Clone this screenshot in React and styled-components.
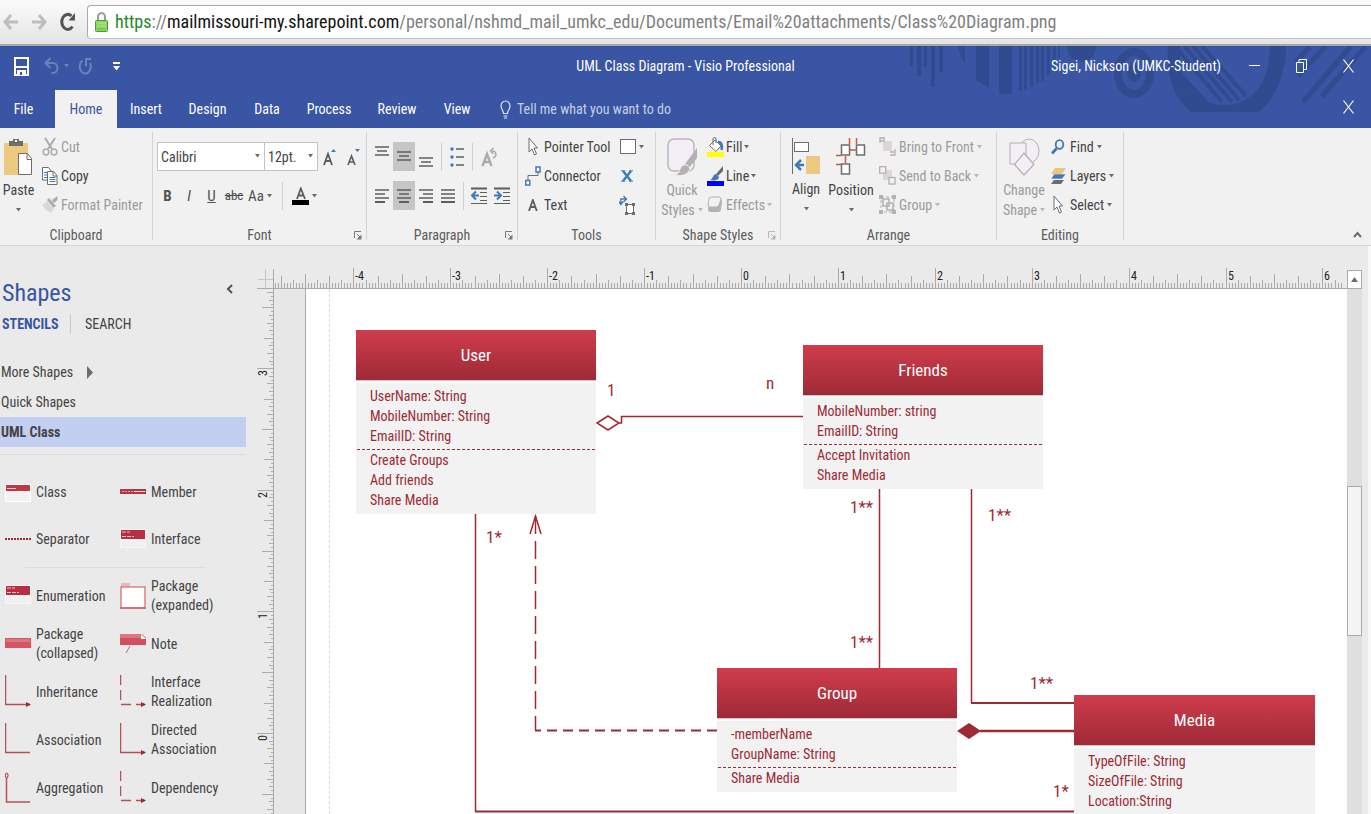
import React from "react";
import styled, { createGlobalStyle, css } from "styled-components";

const FONT = '"Roboto Condensed", Roboto, "Open Sans", sans-serif';
const BLUE = "#3955a3";
const RED = "#9e2a36";
const GREY = "#6d6d6d";
const FAINT = "#b4b0b4";
const ACCENT = "#3f7ab8";

const GlobalStyle = createGlobalStyle`
  * { box-sizing: border-box; }
  body { margin: 0; background: #eaeaea; font: 14px/20px ${FONT}; color: #444; }
  button, select { font: inherit; color: inherit; background: none; border: 0; padding: 0; margin: 0; }
  button { display: inline-flex; align-items: center; white-space: nowrap; }
  a { color: inherit; text-decoration: none; }
  ul { list-style: none; margin: 0; padding: 0; }
  h1, h2, p { margin: 0; font-weight: 400; }
  svg { display: block; flex: none; }
`;

const Page = styled.div`
  display: flex;
  flex-direction: column;
  height: 100vh;
  overflow: hidden;
`;

/* ---------- browser bar ---------- */
const BrowserBar = styled.header`
  display: flex;
  flex: none;
  height: 46px;
  padding-top: 5px;
  background: linear-gradient(#fbfbfb, #e4e4e4);
  border-bottom: 2px solid #a8a8a8;
`;
const NavButtons = styled.nav`
  display: flex;
  align-items: center;
  gap: 12px;
  width: 87px;
  height: 34px;
  padding-left: 3px;
`;
const AddressBox = styled.div`
  display: flex;
  align-items: center;
  gap: 7px;
  flex: 1;
  min-width: 0;
  height: 34px;
  padding-left: 7px;
  background: #fff;
  border: 1px solid #a9a9a9;
  border-right: 0;
  border-bottom-color: #c4c4c4;
  border-radius: 4px 0 0 4px;
`;
const Url = styled.a`
  font-size: 18px;
  line-height: 26px;
  color: #808080;
  white-space: nowrap;
  b { font-weight: 400; color: #111; }
  i { font-style: normal; color: #1d8a1d; }
`;

/* ---------- application title and tabs ---------- */
const AppHeader = styled.div`
  position: relative;
  flex: none;
  background: ${BLUE};
  color: #fff;
`;
const Decoration = styled.svg`
  position: absolute;
  top: 0;
  right: 0;
`;
const TitleRow = styled.div`
  position: relative;
  display: grid;
  grid-template-columns: 1fr auto 1fr;
  align-items: center;
  height: 40px;
`;
const QuickAccess = styled.div`
  display: flex;
  align-items: center;
  padding-left: 14px;
`;
const QuickButton = styled.button`
  width: ${(p) => p.$w}px;
`;
const TitleText = styled.h1`
  font-size: 14px;
  line-height: 20px;
`;
const WindowSide = styled.div`
  display: flex;
  justify-content: flex-end;
  align-items: center;
  gap: 36px;
  padding-right: 17px;
`;
const UserName = styled.span`
  white-space: nowrap;
  margin-right: -8px;
`;
const TabRow = styled.div`
  position: relative;
  display: flex;
  align-items: flex-end;
  height: 42px;
  padding: 0 17px 0 0;
`;
const Tab = styled.button`
  justify-content: center;
  width: ${(p) => p.$w}px;
  height: 38px;
  ${(p) => p.$file && css`
    padding-right: 8px;
  `}
  ${(p) => p.$active && css`
    background: #f1f1f1;
    color: ${BLUE};
  `}
`;
const TellMe = styled.button`
  gap: 6px;
  height: 38px;
  margin-left: 16px;
  color: #c6cfe6;
`;
const TabRowEnd = styled.div`
  display: flex;
  align-items: center;
  height: 42px;
  margin-left: auto;
`;

/* ---------- ribbon ---------- */
const Ribbon = styled.div`
  display: flex;
  flex: none;
  height: 118px;
  padding-top: 4px;
  background: #f1f1f1;
  border-bottom: 1px solid #d4d4d4;
`;
const Group = styled.section`
  display: flex;
  flex: none;
  flex-direction: column;
  width: ${(p) => p.$w}px;
  height: 108px;
  border-right: 1px solid #d4d4d4;
`;
const GroupBody = styled.div`
  display: flex;
  flex: none;
  height: 92px;
  padding-left: ${(p) => p.$pad || 0}px;
`;
const GroupFoot = styled.div`
  display: grid;
  flex: none;
  grid-template-columns: 1fr auto 1fr;
  align-items: center;
  height: 22px;
  padding: 0 4px;
  color: #5c5c5c;
  button { grid-column: 3; justify-self: end; }
`;
const GroupName = styled.h2`
  grid-column: 2;
  font-size: 14px;
  line-height: 20px;
`;
const BigButton = styled.button`
  flex-direction: column;
  flex: none;
  width: ${(p) => p.$w}px;
  height: 90px;
  padding-top: 6px;
  text-align: center;
  line-height: 20px;
  color: ${(p) => (p.$off ? "#9b9b9b" : "#444")};
  svg + span { margin-top: 4px; }
`;
const CaretLine = styled.span`
  display: flex;
  align-items: center;
  justify-content: center;
  gap: 3px;
  height: 20px;
`;
const Column = styled.div`
  display: flex;
  flex-direction: column;
  width: ${(p) => (p.$w ? p.$w + "px" : "auto")};
  padding-left: ${(p) => p.$pad || 0}px;
`;
const Command = styled.button`
  height: 29px;
  gap: ${(p) => p.$gap || 2}px;
  color: ${(p) => (p.$off ? "#9b9b9b" : "#444")};
`;
const IconSlot = styled.span`
  display: flex;
  justify-content: center;
  width: 18px;
`;
const Strip = styled.div`
  display: flex;
  align-items: center;
  height: 29px;
  margin-top: ${(p) => p.$top || 0}px;
`;
const Picker = styled.label`
  position: relative;
  width: ${(p) => p.$w}px;
  margin-right: -1px;
  svg { position: absolute; right: 5px; top: 12px; pointer-events: none; }
`;
const Select = styled.select`
  appearance: none;
  display: block;
  width: 100%;
  height: 29px;
  padding: 0 3px;
  background: #fff;
  border: 1px solid #c3c3c3;
`;
const Glyph = styled.button`
  justify-content: center;
  gap: 3px;
  width: ${(p) => p.$w}px;
  height: 29px;
  font-size: 15px;
  color: #505050;
  background: ${(p) => (p.$on ? "#c6c6c6" : "none")};
  font-weight: ${(p) => (p.$bold ? 700 : 400)};
`;
const Strike = styled.s`
  font-size: 13px;
`;
const Divider = styled.span`
  width: 1px;
  height: 28px;
  margin: 0 ${(p) => p.$m || 7}px;
  background: #d0d0d0;
`;
const Collapse = styled.button`
  align-self: flex-end;
  margin: 0 9px 6px auto;
`;

/* ---------- workspace ---------- */
const Workspace = styled.main`
  display: flex;
  flex: 1;
  min-height: 0;
  border-right: 3px solid #f8f8f8;
`;
const Sidebar = styled.aside`
  display: flex;
  flex: none;
  flex-direction: column;
  width: 247px;
  padding: 30px 1px 0 0;
`;
const SidebarHead = styled.div`
  display: flex;
  align-items: center;
  justify-content: space-between;
  height: 34px;
  padding: 0 13px 0 2px;
  button { height: 26px; align-self: flex-start; }
`;
const SidebarTitle = styled.h2`
  font-size: 24px;
  line-height: 34px;
  color: ${BLUE};
`;
const PaneTabs = styled.div`
  display: flex;
  align-items: center;
  height: 28px;
  padding-left: 2px;
`;
const PaneTab = styled.button`
  height: 20px;
  color: #444;
  padding-left: 14px;
  ${(p) => p.$active && css`
    width: 69px;
    padding-left: 0;
    color: ${BLUE};
    font-weight: 700;
    border-right: 1px solid #c8c8c8;
  `}
`;
const StencilList = styled.ul`
  padding: 19px 0 7px;
  border-bottom: 1px solid #dcdcdc;
`;
const StencilItem = styled.li`
  height: 30px;
  background: ${(p) => (p.$active ? "#c2cef2" : "none")};
  button {
    width: 100%;
    height: 30px;
    padding-left: 1px;
    gap: 14px;
    font-weight: ${(p) => (p.$active ? 700 : 400)};
  }
`;
const ShapeGrid = styled.ul`
  display: grid;
  grid-template-columns: 115px 1fr;
  grid-auto-rows: ${(p) => p.$row}px;
  padding: ${(p) => p.$top}px 0 ${(p) => p.$bottom || 0}px 5px;
`;
const ShapeDivider = styled.hr`
  width: 181px;
  height: 1px;
  margin: 0 0 0 25px;
  border: 0;
  flex: none;
  background: #dcdcdc;
`;
const ShapeButton = styled.button`
  height: 100%;
  gap: 5px;
  text-align: left;
  line-height: 19px;
  span { white-space: pre-line; }
`;
const Stage = styled.div`
  display: grid;
  flex: 1;
  min-width: 0;
  grid-template-columns: 27px minmax(0, 1fr) 15px;
  grid-template-rows: 43px minmax(0, 1fr);
  padding-right: 6px;
`;
const Corner = styled.div`
  display: flex;
  align-items: flex-end;
  justify-content: flex-end;
`;
const TopRuler = styled.div`
  display: flex;
  align-items: flex-end;
  overflow: hidden;
  border-bottom: 1px solid #ababab;
`;
const SideRuler = styled.div`
  display: flex;
  justify-content: flex-end;
  overflow: hidden;
  border-right: 1px solid #ababab;
`;
const TickLabel = styled.text`
  font: 12px ${FONT};
  fill: #222;
`;
const ScrollTop = styled.div`
  display: flex;
  align-items: flex-end;
`;
const ScrollButton = styled.button`
  justify-content: center;
  width: 15px;
  height: 19px;
  background: #fff;
  border: 1px solid #ababab;
`;
const Track = styled.div`
  padding-top: 197px;
  background: #dfdfdf;
`;
const Thumb = styled.div`
  height: 150px;
  background: #f4f4f4;
  border: 1px solid #ababab;
`;
const Pasteboard = styled.div`
  display: flex;
  overflow: hidden;
  padding-left: 31px;
  background: #e7e7e7;
`;
const Sheet = styled.div`
  position: relative;
  flex: 1;
  background: #fff;
  border-left: 1px solid #ababab;
  &::before {
    content: "";
    position: absolute;
    inset: 0 auto 0 23px;
    border-left: 1px dashed #d9d9d9;
  }
`;
const Wires = styled.svg`
  position: absolute;
  top: 0;
  left: 0;
`;
const ClassNode = styled.article`
  position: absolute;
  left: ${(p) => p.$x}px;
  top: ${(p) => p.$y}px;
  width: ${(p) => p.$w}px;
  color: ${RED};
`;
const ClassName = styled.h2`
  height: 51px;
  font-size: 17px;
  line-height: 51px;
  text-align: center;
  color: #fff;
  background: linear-gradient(#d03c4c, #9e2a36);
  border-bottom: 1px solid #e3c3c7;
`;
const ClassBody = styled.div`
  margin-top: 2px;
  padding: 3px 0 4px;
  background: #f2f2f2;
`;
const Member = styled.p`
  padding-left: 14px;
`;
const Split = styled.hr`
  height: 0;
  margin: 3px 1px 0;
  border: 0;
  border-top: 1px dashed ${RED};
`;
const Multiplicity = styled.span`
  position: absolute;
  left: ${(p) => p.$x}px;
  top: ${(p) => p.$y}px;
  font-size: 17px;
  color: ${RED};
`;

/* ---------- icons ---------- */
const Svg = ({ w, h, children, ...rest }) => (
  <svg width={w} height={h} viewBox={`0 0 ${w} ${h}`} fill="none" aria-hidden="true" {...rest}>{children}</svg>
);
const Caret = ({ c = "#6a6a6a" }) => <Svg w={5} h={4}><path d="M0 0h5L2.500 3.500z" fill={c} /></Svg>;
const CloseIcon = () => <Svg w={11} h={14}><path d="M.5.5l10 13M10.500.5l-10 13" stroke="#fff" strokeWidth="1.200" /></Svg>;
const BackIcon = () => <Svg w={16} h={18}><path d="M15 9H2M8 2L2 9l6 7" stroke="#bdbdbd" strokeWidth="3" /></Svg>;
const ForwardIcon = () => <Svg w={16} h={18}><path d="M1 9h13M8 2l6 7-6 7" stroke="#bdbdbd" strokeWidth="3" /></Svg>;
const ReloadIcon = () => (
  <Svg w={17} h={20}><path d="M13.500 14.500A6 7.500 0 1 1 12.500 4" stroke="#555" strokeWidth="3" /><path d="M9.500 8.500H16V1z" fill="#555" /></Svg>
);
const LockIcon = () => (
  <Svg w={13} h={20}>
    <path d="M3 9V5a3.500 4 0 0 1 7 0v4" stroke="#9a9a9a" strokeWidth="2" />
    <rect x=".5" y="8.500" width="12" height="11" rx="1" fill="#8bd65e" stroke="#4c9a35" />
    <path d="M2 11h9M2 14h9" stroke="#b3ea8d" /><path d="M2 17h9" stroke="#6cc045" />
  </Svg>
);
const SaveIcon = () => (
  <Svg w={15} h={19}>
    <path d="M1 1h13v17H1z" stroke="#fff" strokeWidth="2" /><path d="M1 10h13" stroke="#fff" strokeWidth="2" />
    <path d="M3 13h9v5H3z" fill="#fff" /><path d="M3 11h9v2H3zM6 15h2v3H6z" fill={BLUE} />
  </Svg>
);
const UndoIcon = () => <Svg w={15} h={18}><path d="M6.500 1L1.500 6l5 5M2 6h7a4.500 5 0 0 1 0 10H7.500" stroke="#6d82bd" strokeWidth="2" /></Svg>;
const RedoIcon = () => <Svg w={15} h={18}><path d="M4.500 3.500A5.500 7 0 1 0 12 6" stroke="#6d82bd" strokeWidth="2" /><path d="M8 9V2h5" stroke="#6d82bd" strokeWidth="2" /></Svg>;
const CustomizeIcon = () => <Svg w={7} h={9}><path d="M0 0h7v2H0zM0 4h7L3.500 8.500z" fill="#fff" /></Svg>;
const BulbIcon = () => (
  <Svg w={11} h={19}><path d="M3.500 13.500c0-3-2.500-4-2.500-7.500a4.500 5 0 0 1 9 0c0 3.500-2.500 4.500-2.500 7.500zM3.500 16h4M4 18h3" stroke="#dfe5f3" strokeWidth="1.200" /></Svg>
);
const PasteIcon = () => (
  <Svg w={29} h={38}>
    <rect y="5" width="24" height="32" fill="#edc87f" />
    <path d="M5 8V3h4V1h6v2h4v5z" fill="#6d6d6d" /><rect x="11" y="2" width="2" height="2" fill="#fff" />
    <path d="M14.500 15.500h9l4 5v16h-13z" fill="#fff" stroke={GREY} /><path d="M23 15.500v6h5" stroke={GREY} />
  </Svg>
);
const CutIcon = () => (
  <Svg w={16} h={19}>
    <path d="M3 1l7 11M13 1L6 12" stroke="#ababab" strokeWidth="2" />
    <ellipse cx="4" cy="15" rx="2.800" ry="3" stroke="#ababab" strokeWidth="1.500" /><ellipse cx="12" cy="15" rx="2.800" ry="3" stroke="#ababab" strokeWidth="1.500" />
  </Svg>
);
const CopyIcon = () => (
  <Svg w={16} h={18}>
    <path d="M.5.5h6l3 4v8.500h-9z" fill="#fff" stroke={GREY} /><path d="M2 5.500h4M2 8h3M2 10.500h3" stroke={ACCENT} />
    <path d="M5.500 4.500h6l3.500 4v9H5.500z" fill="#fff" stroke={GREY} /><path d="M11 5v4h4" stroke={GREY} /><path d="M7.500 10.500h6M7.500 12.500h6M7.500 14.500h6" stroke={ACCENT} />
  </Svg>
);
const BrushIcon = () => (
  <Svg w={16} h={17}><path d="M15.500 0v4L12 7l-2-3z" fill="#a9a9a9" /><path d="M5 4l2-2 7 8-3 2z" fill="#ababab" /><path d="M0 9l6-4 6 7-3 5-5-3z" fill="#dcd6dc" /></Svg>
);
const Launcher = ({ c = "#7a7a7a" }) => (
  <Svg w={8} h={9}><path d="M.5 7V.5H7" stroke={c} /><path d="M3 3l3 3" stroke={c} /><path d="M7.500 3.500v5h-5z" fill={c} /></Svg>
);
const GrowIcon = () => <Svg w={13} h={18}><path d="M1 17L5 6l4 11M2.500 13h5" stroke="#5c5c5c" strokeWidth="1.800" /><path d="M8 4l2.500-3L13 4z" fill={ACCENT} /></Svg>;
const ShrinkIcon = () => <Svg w={13} h={18}><path d="M1 17l3.500-9L8 17M2 14h5" stroke="#5c5c5c" strokeWidth="1.600" /><path d="M8 1h5l-2.500 3z" fill={ACCENT} /></Svg>;
const FontColorIcon = () => <Svg w={17} h={18}><path d="M5 12L8.800 1.500 13 12M6.500 8.500h5" stroke="#5c5c5c" strokeWidth="1.800" /><path d="M0 13h17v5H0z" fill="#000" /></Svg>;
const Lines = ({ rows, w = 14 }) => (
  <Svg w={w} h={14}>{rows.map(([x1, x2], i) => <path key={i} d={`M${x1} ${i * 4 + 1}H${x2}`} stroke="#5e5e5e" strokeWidth={i === 3 ? 2 : 1.500} />)}</Svg>
);
const FULL = [0, 14], NARROW = [2, 12];
const VLines = ({ y }) => (
  <Svg w={14} h={28}>{[[0, 14], NARROW, [0, 14]].map(([a, b], i) => <path key={i} d={`M${a} ${y + i * 4}H${b}`} stroke="#5e5e5e" strokeWidth="1.500" />)}</Svg>
);
const BulletIcon = () => (
  <Svg w={14} h={20}>{[2, 10, 18].map((y) => <g key={y}><circle cx="2" cy={y} r="1.700" fill={ACCENT} /><path d={`M6 ${y}h8`} stroke="#5e5e5e" strokeWidth="1.500" /></g>)}</Svg>
);
const RotateTextIcon = () => (
  <Svg w={17} h={20}><path d="M1.500 19L6 7l4.500 12M3 15h6" stroke="#ababab" strokeWidth="2.400" /><path d="M12 11c4-1 4-7-1-7M12.500 1L9.500 4l3 3" stroke="#ababab" strokeWidth="1.500" /></Svg>
);
const IndentIcon = ({ flip }) => (
  <Svg w={17} h={18}>
    <path d="M0 1.500h16" stroke="#5e5e5e" strokeWidth="2" /><path d="M9 5.500h7M9 9.500h7M9 13.500h7M0 16.500h16" stroke="#5e5e5e" strokeWidth="1.200" />
    {flip ? <path d="M0 8.500h6M3 4.500l4 4-4 4" stroke={ACCENT} strokeWidth="2" /> : <path d="M1 8.500h7M5 4.500l-4 4 4 4" stroke={ACCENT} strokeWidth="2" />}
  </Svg>
);
const PointerIcon = () => (
  <Svg w={10} h={19}><path d="M1 1v14l3-3 2.500 6 2-1L6 11h3.500z" fill="#fff" stroke="#6d6d6d" /></Svg>
);
const ConnectorIcon = () => (
  <Svg w={16} h={20}><path d="M3 14V9.500h10V6" stroke={GREY} /><rect x=".75" y="14.500" width="4" height="4.500" fill="#fff" stroke={ACCENT} strokeWidth="1.500" /><rect x="11" y="1" width="4" height="5" fill="#fff" stroke={ACCENT} strokeWidth="1.500" /></Svg>
);
const TextIcon = () => <Svg w={10} h={12}><path d="M1 12L4.800 1l4 11M2.500 8h5" stroke="#5c5c5c" strokeWidth="1.800" /></Svg>;
const BoxIcon = () => <Svg w={16} h={15}><rect x=".5" y=".5" width="15" height="14" fill="#fff" stroke={GREY} /></Svg>;
const CrossIcon = () => <Svg w={12} h={12}><path d="M2 1l8 10M10 1L2 11" stroke={ACCENT} strokeWidth="2.400" /><path d="M0 .8h4M8 .8h4M0 11.200h4M8 11.200h4" stroke={ACCENT} /></Svg>;
const TextBlockIcon = () => (
  <Svg w={16} h={20}><path d="M1.800 8V4H7M4.500 1l3 3-3 3M0 6.500L1.800 9.500 4 6.500" stroke={ACCENT} strokeWidth="1.300" /><rect x="7.500" y="9.500" width="7" height="9" fill="#fff" stroke={GREY} /><path d="M6 8h3v3H6zM13 8h3v3h-3zM6 17h3v3H6zM13 17h3v3h-3z" fill={GREY} /></Svg>
);
const QuickStylesIcon = () => (
  <Svg w={31} h={38}><rect x="1" y="1" width="26" height="32" rx="6" fill="#f4eff6" stroke="#bcb6bc" strokeWidth="1.500" /><path d="M30 10v10l-8 10-4-4z" fill="#b4b0b4" /><path d="M20 27c-5-1-7 3-8 7-1 2-3 3-5 3 7 2 15 0 16-7z" fill="#b4b0b4" stroke="#f1f1f1" /></Svg>
);
const FillIcon = () => (
  <Svg w={17} h={20}><path d="M2.500 8.500L8 3l6 6-5 5.500z" fill="#fff" stroke={GREY} /><path d="M6 8V2a1.500 1.500 0 0 1 3 0v4" stroke={GREY} /><path d="M11 5c4 0 4.500 4 3.500 8" stroke={ACCENT} strokeWidth="2.500" /><path d="M0 15h17v5H0z" fill="#ff0" /></Svg>
);
const LineIcon = () => (
  <Svg w={17} h={20}><path d="M16 0v5l-5 5-2-2z" fill="#6d6d6d" /><path d="M9 8l3 3c0 3-4 4-9 3 3-1 3-6 6-6z" fill={ACCENT} /><path d="M0 15h17v5H0z" fill="#00f" /></Svg>
);
const EffectsIcon = () => (
  <Svg w={16} h={17}><path d="M3 3h9a3 3 0 0 1 3 3l-1 7a3 3 0 0 1-3 3H4a3 3 0 0 1-3-3z" fill="#b4b0b4" /><path d="M4 1h8a2 2 0 0 1 2 2l-2 6a3 3 0 0 1-3 2H3a2 2 0 0 1-2-2l1-6a2 2 0 0 1 2-2z" fill="#f4f1f4" stroke="#b4b0b4" /></Svg>
);
const AlignIcon = () => (
  <Svg w={29} h={37}><path d="M.5 0v36" stroke="#6d6d6d" /><rect x="2.500" y="4.500" width="14" height="9" fill="#fff" stroke={GREY} /><rect x="14" y="18" width="14" height="18" fill="#edc87f" /><path d="M4 27h8M9 22l-5 5 5 5" stroke={ACCENT} strokeWidth="2.500" /></Svg>
);
const PositionIcon = () => (
  <Svg w={30} h={38}>
    <path d="M13.500 0v6M20.500 0v6M14 12h7M9.500 18v7M0 17.500h5M0 26.500h5" stroke="#d0583a" strokeWidth="1.500" />
    <rect x="5.500" y="7" width="8" height="10" fill="#fff" stroke="#6d6d6d" strokeWidth="1.500" /><rect x="20.500" y="7" width="8" height="10" fill="#fff" stroke="#6d6d6d" strokeWidth="1.500" /><rect x="5.500" y="26" width="8" height="10" fill="#fff" stroke="#6d6d6d" strokeWidth="1.500" />
  </Svg>
);
const FrontIcon = () => <Svg w={17} h={19}><rect x="4" y="4" width="9" height="10" fill="#dcd6dc" /><path d="M1 6V1h5M11 18h5v-6M1 4h4V1M11 15h4" stroke={FAINT} strokeWidth="1.300" /></Svg>;
const BackwardIcon = () => <Svg w={17} h={19}><rect x="4" y="4" width="9" height="10" fill="#dcd6dc" /><rect x=".7" y=".7" width="6" height="6.500" fill="#f4f1f4" stroke={FAINT} strokeWidth="1.300" /><rect x="10" y="11.500" width="6" height="6.500" fill="#f4f1f4" stroke={FAINT} strokeWidth="1.300" /></Svg>;
const GroupIcon = () => (
  <Svg w={17} h={19}><path d="M2 2h13v15H2z" stroke={FAINT} strokeDasharray="3 2" /><rect x="4" y="4" width="6" height="7" stroke={FAINT} strokeWidth="1.500" /><rect x="8" y="8" width="6" height="7" stroke={FAINT} strokeWidth="1.500" /><path d="M0 0h4v4H0zM13 0h4v4h-4zM0 15h4v4H0zM13 15h4v4h-4z" fill={FAINT} /></Svg>
);
const ChangeIcon = () => (
  <Svg w={31} h={38}><ellipse cx="20" cy="13" rx="10" ry="12" fill="#f4eff6" stroke={FAINT} /><path d="M1 5h16v21H1z" fill="#f4eff6" stroke={FAINT} /><path d="M15 15l10 11.500L15 37 5.500 26.500z" fill="#f4eff6" stroke={FAINT} strokeWidth="1.300" /></Svg>
);
const FindIcon = () => <Svg w={14} h={16}><ellipse cx="8.500" cy="5.500" rx="3.800" ry="4.300" stroke={ACCENT} strokeWidth="1.800" /><path d="M5.500 9.500L1 14.500" stroke={ACCENT} strokeWidth="2.800" /></Svg>;
const LayersIcon = () => <Svg w={15} h={18}><path d="M0 17l3-4h10l-3 4z" fill="#6d6d6d" /><path d="M0 12l3-5h12l-4 5z" fill={ACCENT} stroke="#f1f1f1" strokeWidth=".6" /><path d="M0 7l4-6h11l-4 6z" fill="#edc47a" /></Svg>;

/* stencil thumbnails */
const Wire = (props) => <path stroke={RED} fill="none" {...props} />;
const thumbs = {
  header: (
    <Svg w={26} h={20}><path d="M0 1h26v18H0z" fill="#fff" /><path d="M1 2h24v6H1z" fill="#c33545" /><path d="M2 5.500h9" stroke="#f0c8cc" /><path d="M1 9h24v9H1z" fill="#f2f2f2" /></Svg>
  ),
  member: <Svg w={26} h={20}><path d="M0 6h26v5H0z" fill="#b03643" /><path d="M14 8h11v1H14z" fill="#f4e3e5" /><path d="M2 8.500h11" stroke="#dba5ab" strokeDasharray="2 1" /></Svg>,
  separator: <Svg w={26} h={20}><Wire d="M0 9h26" strokeWidth="2" strokeDasharray="2 1" /></Svg>,
  iface: (
    <Svg w={26} h={22}><path d="M0 0h26v19H0z" fill="#f7f7f7" /><path d="M1 1h24v9H1z" fill="#b8303f" /><path d="M2 3h8M2 7.500h12" stroke="#ecc0c5" strokeDasharray="4 1" /><path d="M1 12h24v6H1z" fill="#f0f0f0" /></Svg>
  ),
  expanded: <Svg w={26} h={28}><path d="M1 1h9v4H1z" fill="#e9b8bd" /><path d="M1 5h24v21H1z" fill="#fff" stroke="#dc7f89" strokeWidth="1.500" /><path d="M0 26h26" stroke="#d3606c" strokeWidth="1.500" /></Svg>,
  collapsed: <Svg w={26} h={20}><path d="M0 4h26v10H0z" fill="#d55563" /><path d="M1 5h24v3H1z" fill="#dd7681" /></Svg>,
  note: <Svg w={26} h={24}><path d="M0 2h22l4 4v7H0z" fill="#d34f5e" /><path d="M0 2h22v4H0z" fill="#dc7681" /><path d="M21 2l5 5h-5z" fill="#fff" /><Wire d="M10 14l-4 7" stroke="#d3606c" /></Svg>,
};
const ElbowThumb = ({ dashed, arrow, ring }) => (
  <Svg w={26} h={34}>
    <Wire d={ring ? "M1.500 7v24H25" : "M.5 0v29.500H25"} stroke="#b4525c" strokeWidth="1.500" strokeDasharray={dashed ? "10 5" : undefined} />
    {arrow && <path d="M21 27l5 2.500-5 2.500z" fill={RED} />}
    {ring && <ellipse cx="1.700" cy="4.500" rx="1.300" ry="2.500" stroke={RED} />}
  </Svg>
);

/* ---------- data ---------- */
const tabs = [["File", 55], ["Home", 62], ["Insert", 58], ["Design", 65], ["Data", 54], ["Process", 70], ["Review", 66], ["View", 54]];
const shapesTop = [["Class", thumbs.header], ["Member", thumbs.member], ["Separator", thumbs.separator], ["Interface", thumbs.iface]];
const shapesBottom = [
  ["Enumeration", thumbs.iface], ["Package\n(expanded)", thumbs.expanded],
  ["Package\n(collapsed)", thumbs.collapsed], ["Note", thumbs.note],
  ["Inheritance", <ElbowThumb arrow />], ["Interface\nRealization", <ElbowThumb arrow dashed />],
  ["Association", <ElbowThumb />], ["Directed\nAssociation", <ElbowThumb arrow />],
  ["Aggregation", <ElbowThumb ring />], ["Dependency", <ElbowThumb arrow dashed />],
];
const classes = [
  { name: "User", x: 50, y: 41, w: 240, fields: ["UserName: String", "MobileNumber: String", "EmailID: String"], methods: ["Create Groups", "Add friends", "Share Media"] },
  { name: "Friends", x: 497, y: 56, w: 240, fields: ["MobileNumber: string", "EmailID: String"], methods: ["Accept Invitation", "Share Media"] },
  { name: "Group", x: 411, y: 379, w: 240, fields: ["-memberName", "GroupName: String"], methods: ["Share Media"] },
  { name: "Media", x: 768, y: 406, w: 241, fields: ["TypeOfFile: String", "SizeOfFile: String", "Location:String"], methods: [] },
];
const multiplicities = [
  ["1", 301, 91], ["n", 460, 84], ["1*", 180, 238], ["1**", 544, 208], ["1**", 682, 216],
  ["1**", 544, 343], ["1**", 724, 384], ["1*", 747, 492],
];

const tickLength = (i) => (i % 32 === 0 ? 20 : i % 16 === 0 ? 14 : i % 8 === 0 ? 12 : i % 4 === 0 ? 8 : 5);
const TopTicks = () => {
  const unit = 96.9, zero = 468;
  const first = -154, last = 198;
  const ticks = [];
  for (let i = first; i <= last; i++) {
    const x = Math.round(zero + (i * unit) / 32) - 0.5;
    if (x > 0) ticks.push(`M${x} 20v-${tickLength(i)}`);
  }
  return (
    <Svg w={1073} h={20}>
      <path d={ticks.join("")} stroke="#ababab" />
      {[-4, -3, -2, -1, 0, 1, 2, 3, 4, 5, 6].map((n) => <TickLabel key={n} x={Math.round(zero + n * unit) + 1} y="12">{n}</TickLabel>)}
    </Svg>
  );
};
const SideTicks = () => {
  const unit = 121.6, zero = 444;
  const ticks = [];
  for (let i = -22; i <= 116; i++) {
    const len = i % 32 === 0 ? 16 : i % 16 === 0 ? 11 : i % 8 === 0 ? 9 : i % 4 === 0 ? 6 : i % 2 === 0 ? 4 : 2;
    ticks.push(`M16 ${Math.round(zero - (i * unit) / 32) + 0.5}h-${len}`);
  }
  return (
    <Svg w={16} h={525}>
      <path d={ticks.join("")} stroke="#ababab" />
      {[3, 2, 1, 0].map((n) => {
        const y = Math.round(zero - n * unit) + 8;
        return <TickLabel key={n} x="10" y={y} transform={`rotate(-90 10 ${y})`}>{n}</TickLabel>;
      })}
    </Svg>
  );
};
const HeaderArt = () => (
  <Decoration width="465" height="67" viewBox="906 46 465 67" fill="none" aria-hidden="true">
    <g fill="#304b8f">
      <path d="M910 46h3v20h-3zM917 46h4v30h-4zM924 46h3v21h-3zM931 46h4v41h-4zM939 46h4v26h-4z" />
      <path d="M958 46h7v17l-4-6zM976 46h13v42l-13-8zM999 46h13v48h-13zM1019 46h3v45h-3zM1024 46h3v44h-3zM1030 46h3v41h-3zM1036 46h3v37h-3zM1041 46h3v35h-3zM1047 46h3v29h-3zM1053 46h3v20h-3zM1058 46h2v12h-2z" />
      <path d="M1067 46h29a14 15 0 0 1-29 0z" />
      <path d="M1168 46h10c0 30 15 59 47 59 25 0 45-20 45-59h16c0 26-10 54-28 66h-67c-16-12-25-36-23-66z" />
    </g>
    <ellipse cx="1134" cy="73" rx="16" ry="21" stroke="#304b8f" strokeWidth="8" />
    <ellipse cx="1134" cy="73" rx="7" ry="9" fill="#304b8f" />
    <path d="M1178 46v26l28 30M1178 50l44 52M1184 46l48 56M1193 46l46 54M1202 46l44 50" stroke="#304b8f" strokeWidth="4" />
    <path d="M1296 62l14-16M1298 76l28-30M1303 102l48-56M1322 96l44-50" stroke="#304b8f" strokeWidth="5" />
  </Decoration>
);

const RibbonGroup = ({ name, w, pad, launcher, children }) => (
  <Group $w={w} aria-label={name}>
    <GroupBody $pad={pad}>{children}</GroupBody>
    <GroupFoot>
      <GroupName>{name}</GroupName>
      {launcher && <button aria-label={`${name} options`}><Launcher c={launcher} /></button>}
    </GroupFoot>
  </Group>
);
const Cmd = ({ icon, label, caret, off, gap }) => (
  <Command $off={off} $gap={gap}>
    <IconSlot>{icon}</IconSlot>
    <span>{label}</span>
    {caret && <Caret c={off ? "#b8b8b8" : undefined} />}
  </Command>
);
const ShapeList = ({ items, ...rest }) => (
  <ShapeGrid {...rest}>
    {items.map(([label, thumb]) => <li key={label}><ShapeButton>{thumb}<span>{label}</span></ShapeButton></li>)}
  </ShapeGrid>
);

export default function App() {
  return (
    <Page>
      <GlobalStyle />
      <BrowserBar>
        <NavButtons>
          <button aria-label="Back"><BackIcon /></button>
          <button aria-label="Forward"><ForwardIcon /></button>
          <button aria-label="Reload"><ReloadIcon /></button>
        </NavButtons>
        <AddressBox>
          <LockIcon />
          <Url href="#"><i>https</i>://<b>mailmissouri-my.sharepoint.com</b>/personal/nshmd_mail_umkc_edu/Documents/Email%20attachments/Class%20Diagram.png</Url>
        </AddressBox>
      </BrowserBar>

      <AppHeader>
        <HeaderArt />
        <TitleRow>
          <QuickAccess>
            <QuickButton $w={30} aria-label="Save"><SaveIcon /></QuickButton>
            <QuickButton $w={20} aria-label="Undo"><UndoIcon /></QuickButton>
            <QuickButton $w={14} aria-label="Undo list"><Caret c="#6d82bd" /></QuickButton>
            <QuickButton $w={35} aria-label="Redo"><RedoIcon /></QuickButton>
            <QuickButton $w={10} aria-label="Customize toolbar"><CustomizeIcon /></QuickButton>
          </QuickAccess>
          <TitleText>UML Class Diagram - Visio Professional</TitleText>
          <WindowSide>
            <UserName>Sigei, Nickson (UMKC-Student)</UserName>
            <button aria-label="Minimize"><Svg w={11} h={2}><path d="M0 .5h11" stroke="#fff" /></Svg></button>
            <button aria-label="Restore"><Svg w={11} h={14}><path d="M.5 3.500h7v10h-7zM3 3V.5h7.500v10H8" stroke="#fff" /></Svg></button>
            <button aria-label="Close"><CloseIcon /></button>
          </WindowSide>
        </TitleRow>
        <TabRow>
          {tabs.map(([name, w]) => <Tab key={name} $w={w} $file={name === "File"} $active={name === "Home"}>{name}</Tab>)}
          <TellMe><BulbIcon />Tell me what you want to do</TellMe>
          <TabRowEnd><button aria-label="Close document"><CloseIcon /></button></TabRowEnd>
        </TabRow>
      </AppHeader>

      <Ribbon>
        <RibbonGroup name="Clipboard" w={153}>
          <BigButton $w={37}><PasteIcon /><span>Paste</span><CaretLine><Caret /></CaretLine></BigButton>
          <Column $pad={4}>
            <Cmd off icon={<CutIcon />} label="Cut" />
            <Cmd icon={<CopyIcon />} label="Copy" />
            <Cmd off icon={<BrushIcon />} label="Format Painter" />
          </Column>
        </RibbonGroup>

        <RibbonGroup name="Font" w={214} pad={4} launcher="#7a7a7a">
          <Column>
            <Strip $top={10}>
              <Picker $w={108}><Select aria-label="Font" defaultValue="Calibri"><option>Calibri</option></Select><Caret /></Picker>
              <Picker $w={54}><Select aria-label="Font size" defaultValue="12pt."><option>12pt.</option></Select><Caret /></Picker>
              <Glyph $w={25} aria-label="Grow font"><GrowIcon /></Glyph>
              <Glyph $w={22} aria-label="Shrink font"><ShrinkIcon /></Glyph>
            </Strip>
            <Strip $top={10}>
              <Glyph $w={21} $bold>B</Glyph>
              <Glyph $w={22}><em>I</em></Glyph>
              <Glyph $w={23}><u>U</u></Glyph>
              <Glyph $w={22}><Strike>abc</Strike></Glyph>
              <Glyph $w={30}>Aa<Caret /></Glyph>
              <Divider />
              <Glyph $w={29} aria-label="Font color"><FontColorIcon /><Caret /></Glyph>
            </Strip>
          </Column>
        </RibbonGroup>

        <RibbonGroup name="Paragraph" w={151} pad={4} launcher="#7a7a7a">
          <Column>
            <Strip $top={10}>
              <Glyph $w={22} aria-label="Align top"><VLines y={4} /></Glyph>
              <Glyph $w={22} $on aria-label="Align middle"><VLines y={9} /></Glyph>
              <Glyph $w={22} aria-label="Align bottom"><VLines y={15} /></Glyph>
              <Divider $m={4} />
              <Glyph $w={22} aria-label="Bullets"><BulletIcon /></Glyph>
              <Divider $m={4} />
              <Glyph $w={24} aria-label="Rotate text"><RotateTextIcon /></Glyph>
            </Strip>
            <Strip $top={10}>
              <Glyph $w={22} aria-label="Align left"><Lines rows={[FULL, [0, 10], FULL, [0, 10]]} /></Glyph>
              <Glyph $w={22} $on aria-label="Center"><Lines rows={[FULL, NARROW, FULL, NARROW]} /></Glyph>
              <Glyph $w={22} aria-label="Align right"><Lines rows={[FULL, [4, 14], FULL, [4, 14]]} /></Glyph>
              <Glyph $w={22} aria-label="Justify"><Lines rows={[FULL, FULL, FULL, FULL]} /></Glyph>
              <Divider $m={4} />
              <Glyph $w={23} aria-label="Decrease indent"><IndentIcon /></Glyph>
              <Glyph $w={23} aria-label="Increase indent"><IndentIcon flip /></Glyph>
            </Strip>
          </Column>
        </RibbonGroup>

        <RibbonGroup name="Tools" w={138} pad={6}>
          <Column $w={92}>
            <Cmd icon={<PointerIcon />} label="Pointer Tool" />
            <Cmd icon={<ConnectorIcon />} label="Connector" />
            <Cmd icon={<TextIcon />} label="Text" />
          </Column>
          <Column>
            <Glyph $w={32} aria-label="Rectangle"><BoxIcon /><Caret /></Glyph>
            <Glyph $w={22} aria-label="Connection point"><CrossIcon /></Glyph>
            <Glyph $w={22} aria-label="Text block"><TextBlockIcon /></Glyph>
          </Column>
        </RibbonGroup>

        <RibbonGroup name="Shape Styles" w={125} pad={4} launcher="#b8b8b8">
          <BigButton $w={44} $off><QuickStylesIcon /><span>Quick</span><CaretLine>Styles<Caret c="#b8b8b8" /></CaretLine></BigButton>
          <Column $pad={2}>
            <Cmd icon={<FillIcon />} label="Fill" caret />
            <Cmd icon={<LineIcon />} label="Line" caret />
            <Cmd off icon={<EffectsIcon />} label="Effects" caret />
          </Column>
        </RibbonGroup>

        <RibbonGroup name="Arrange" w={216} pad={5}>
          <BigButton $w={40}><AlignIcon /><span>Align</span><CaretLine><Caret /></CaretLine></BigButton>
          <BigButton $w={50}><PositionIcon /><span>Position</span><CaretLine><Caret /></CaretLine></BigButton>
          <Column $pad={2}>
            <Cmd off icon={<FrontIcon />} label="Bring to Front" caret gap={3} />
            <Cmd off icon={<BackwardIcon />} label="Send to Back" caret gap={3} />
            <Cmd off icon={<GroupIcon />} label="Group" caret gap={3} />
          </Column>
        </RibbonGroup>

        <RibbonGroup name="Editing" w={127} pad={3}>
          <BigButton $w={48} $off><ChangeIcon /><span>Change</span><CaretLine>Shape<Caret c="#b8b8b8" /></CaretLine></BigButton>
          <Column $pad={1}>
            <Cmd icon={<FindIcon />} label="Find" caret gap={3} />
            <Cmd icon={<LayersIcon />} label="Layers" caret gap={3} />
            <Cmd icon={<PointerIcon />} label="Select" caret gap={3} />
          </Column>
        </RibbonGroup>
        <Collapse aria-label="Collapse ribbon"><Svg w={9} h={8}><path d="M1 6l3.500-4L8 6" stroke={GREY} strokeWidth="2" /></Svg></Collapse>
      </Ribbon>

      <Workspace>
        <Sidebar>
          <SidebarHead>
            <SidebarTitle>Shapes</SidebarTitle>
            <button aria-label="Minimize shapes window"><Svg w={7} h={10}><path d="M6 1L2 5l4 4" stroke="#555" strokeWidth="2" /></Svg></button>
          </SidebarHead>
          <PaneTabs>
            <PaneTab $active>STENCILS</PaneTab>
            <PaneTab>SEARCH</PaneTab>
          </PaneTabs>
          <StencilList>
            <StencilItem><button>More Shapes<Svg w={6} h={13}><path d="M0 0l6 6.500L0 13z" fill="#6d6d6d" /></Svg></button></StencilItem>
            <StencilItem><button>Quick Shapes</button></StencilItem>
            <StencilItem $active><button>UML Class</button></StencilItem>
          </StencilList>
          <ShapeList items={shapesTop} $row={47} $top={14} $bottom={4} />
          <ShapeDivider />
          <ShapeList items={shapesBottom} $row={48} $top={4} />
        </Sidebar>

        <Stage>
          <Corner><Svg w={17} h={20}><path d="M8.500 0v19M1 10.500h15" stroke="#c6c6c6" /><path d="M0 19.500h17M16.500 0v20" stroke="#ababab" /></Svg></Corner>
          <TopRuler><TopTicks /></TopRuler>
          <ScrollTop><ScrollButton aria-label="Scroll up"><Svg w={7} h={5}><path d="M0 5l3.500-5L7 5z" fill="#6d6d6d" /></Svg></ScrollButton></ScrollTop>
          <SideRuler><SideTicks /></SideRuler>
          <Pasteboard>
            <Sheet>
              <Wires width="1041" height="525" viewBox="306 289 1041 525" fill="none" stroke={RED} aria-hidden="true">
                <path d="M597 423l11-7 11 7-11 7zM619 423h2.500v-6.500H803" strokeWidth="1.500" />
                <path d="M475.500 514v297.500" strokeWidth="1.500" /><path d="M475 811.500h599" strokeWidth="2" />
                <path d="M530 534l5.500-18 5.500 18" strokeWidth="1.500" />
                <path d="M535.500 516v214" strokeWidth="1.500" strokeDasharray="18 7" />
                <path d="M717 730.500H535" strokeWidth="2" strokeDasharray="10 6" />
                <path d="M879.500 488v181M971.500 488v215" strokeWidth="1.500" /><path d="M971 703h103" strokeWidth="2" />
                <path d="M957 731l12-8 12 8-12 8z" fill={RED} stroke="none" /><path d="M980 731h94" strokeWidth="2.500" />
              </Wires>
              {classes.map((c) => (
                <ClassNode key={c.name} $x={c.x} $y={c.y} $w={c.w}>
                  <ClassName>{c.name}</ClassName>
                  <ClassBody>
                    {c.fields.map((f) => <Member key={f}>{f}</Member>)}
                    <Split />
                    {c.methods.map((m) => <Member key={m}>{m}</Member>)}
                  </ClassBody>
                </ClassNode>
              ))}
              {multiplicities.map(([t, x, y], i) => <Multiplicity key={i} $x={x} $y={y}>{t}</Multiplicity>)}
            </Sheet>
          </Pasteboard>
          <Track><Thumb /></Track>
        </Stage>
      </Workspace>
    </Page>
  );
}
